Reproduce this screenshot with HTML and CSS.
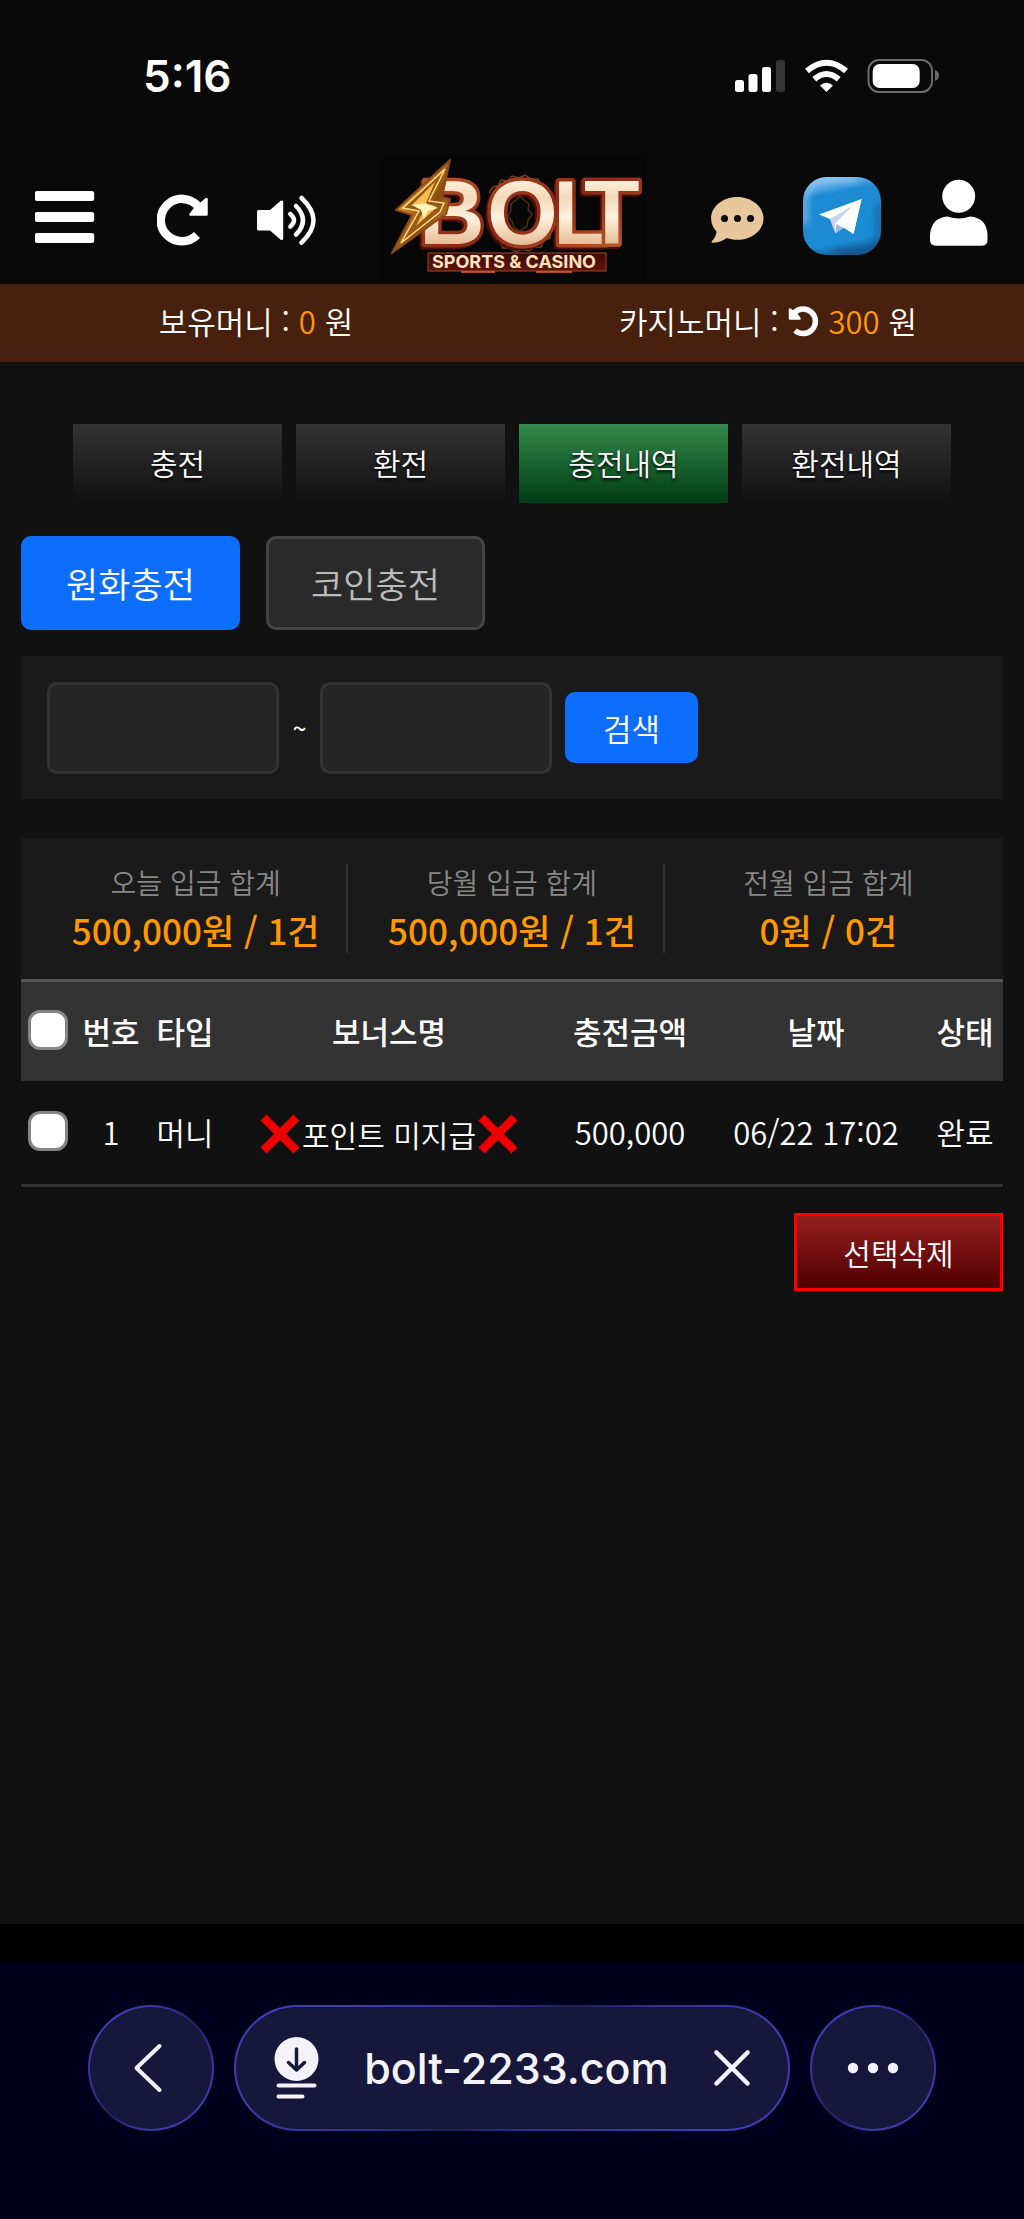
FILE: index.html
```html
<!DOCTYPE html>
<html lang="ko">
<head>
<meta charset="utf-8">
<meta name="viewport" content="width=device-width, initial-scale=1">
<title>BOLT 충전내역</title>
<link rel="stylesheet" href="styles.css">
</head>
<body>
<div class="status">
  <time class="clock">5:16</time>
  <svg class="status-icons" viewBox="735 59 204 34" aria-hidden="true">
    <g fill="#fff">
      <rect x="735" y="80" width="9" height="12" rx="2.5"/>
      <rect x="748.500" y="74" width="9" height="18" rx="2.500"/>
      <rect x="762" y="67" width="9" height="25" rx="2.500"/>
      <rect x="776" y="60" width="9" height="32" rx="2.500" fill="#343436"/>
      <path d="M826.500 92l-6.500-6.500q6.500-5.500 13 0z"/>
      <rect x="872.700" y="64" width="47" height="24" rx="7"/>
    </g>
    <g fill="none" stroke="#fff" stroke-width="6">
      <path d="M807 71q19.500-16.500 39 0"/>
      <path d="M814.300 79.300q12.200-10.600 24.400 0"/>
    </g>
    <rect x="868.500" y="60" width="63.500" height="32" rx="10.500" fill="none" stroke="#6b6b6c" stroke-width="2"/>
    <path d="M935 70q4 1.500 4 5.500t-4 5.500z" fill="#6b6b6c"/>
  </svg>
</div>
<header class="header">
  <div class="group group-left">
    <button type="button" class="icon-btn" aria-label="메뉴">
      <svg width="73" height="84" viewBox="35 176 73 84" fill="#fff"><rect x="34.700" y="191" width="59.500" height="10" rx="2.500"/><rect x="34.700" y="212" width="59.500" height="10" rx="2.500"/><rect x="34.700" y="233" width="59.500" height="10" rx="2.500"/></svg>
    </button>
    <button type="button" class="icon-btn" aria-label="새로고침">
      <svg width="51" height="84" viewBox="157 176 51 84"><path d="M197 235a21.200 21.200 0 1 1 .8-29" fill="none" stroke="#fff" stroke-width="8.500"/><path d="M206.500 199v15.500h-16l4.500-6 5-4z" fill="#fff" stroke="#fff" stroke-width="2.500" stroke-linejoin="round"/></svg>
    </button>
    <button type="button" class="icon-btn" aria-label="소리">
      <svg width="59" height="84" viewBox="257 176 59 84"><path d="M258.500 211.500h12.200l11-9.500v36.500l-11-9.500h-12.200z" fill="#fff" stroke="#fff" stroke-width="3" stroke-linejoin="round"/><g fill="none" stroke="#fff" stroke-width="4.500" stroke-linecap="round"><path d="M290.300 214q7.500 6.200 0 12.600"/><path d="M296 206q14 14.300 0 28.600"/><path d="M301.500 198q24 22.300 0 44.600"/></g></svg>
    </button>
  </div>
  <a class="logo" href="#" aria-label="BOLT Sports &amp; Casino">
    <svg width="265" height="126" viewBox="380 158 265 126">
      <defs>
        <linearGradient id="ivory" x1="0" y1="0" x2="0" y2="1"><stop offset=".15" stop-color="#fff3df"/><stop offset=".35" stop-color="#f3d9ba"/><stop offset=".55" stop-color="#fff2df"/><stop offset=".85" stop-color="#e2b58a"/></linearGradient>
        <linearGradient id="rim" x1="0" y1="0" x2="1" y2="1"><stop offset="0" stop-color="#c06030"/><stop offset=".5" stop-color="#8a2813"/><stop offset="1" stop-color="#c8642f"/></linearGradient>
        <linearGradient id="gold" x1="0" y1="0" x2="1" y2="1"><stop offset="0" stop-color="#ffe9a3"/><stop offset=".35" stop-color="#c98a2e"/><stop offset=".6" stop-color="#8a4a10"/><stop offset="1" stop-color="#e9a742"/></linearGradient>
        <linearGradient id="plate" x1="0" y1="0" x2="0" y2="1"><stop offset="0" stop-color="#3a0b08"/><stop offset="1" stop-color="#641309"/></linearGradient>
      </defs>
      <rect x="380" y="154" width="265" height="130" fill="#070707"/>
      <path d="M488 196l4-6 5-1 3-6 7 1 4-5 7 2 6-3 6 4 7 0 3 6 6 2 2 7 5 5-1 7 4 6-3 7 2 7-5 5-1 7-6 3-3 6-7 0-5 4-7-2-6 3-6-4-7 0-4-6" fill="none" stroke="#6d4519" stroke-width="1.500"/>
      <text class="wordmark" x="418 486 552 583" y="247" fill="url(#ivory)" stroke="url(#rim)">BOLT</text>
      <path d="M519 199l5 5 4 3-1 6 4 4-4 6-1 6-7 5-6-4-2-6-4-5 3-6 0-6 5-4z" fill="none" stroke="#4e3013" stroke-width="1.500"/>
      <path d="M449 163l-54 50 16 5-20 38 54-39 4-15-8-2z" fill="url(#gold)" stroke="#8b4a12" stroke-width="2" stroke-linejoin="round"/>
      <path d="M444 172l-42 39 16 3-18 32 39-31 4-9-15-2z" fill="#9b5917" stroke="#ffdc80" stroke-width="1.500"/>
      <path d="M434 185l-24 24h15l-10 20 19-17-9-6z" fill="#f5bd4f"/>
      <path d="M411 208l12-2 10 3 4 2-10 3-4 8-3-9z" fill="#fff3b8"/>
      <rect x="427" y="256" width="178" height="18" fill="url(#plate)" stroke="#9a4a2a"/>
      <text class="tagline" x="431" y="271" fill="#ffe2bd">SPORTS &amp; CASINO</text>
      <path d="M460 275h34M535 275h36" stroke="#e8672c" stroke-width="1.500"/>
    </svg>
  </a>
  <div class="group group-right">
    <button type="button" class="icon-btn" aria-label="채팅">
      <svg width="53" height="84" viewBox="711 176 53 84"><path d="M737.300 197c14.500 0 26.200 9.600 26.200 21.400s-11.700 21.400-26.200 21.400c-4.300 0-7-.8-10.500-1.800-4 3-9 4.800-14.300 4.800-1 0-1.300-.8-.7-1.500 2.500-2.500 4.300-6 4.800-9.500-3.500-4-5.500-8.300-5.500-13.400 0-11.800 11.700-21.400 26.200-21.400z" fill="#e9c79d"/><g fill="#090909"><circle cx="724.500" cy="218.500" r="3.500"/><circle cx="737.500" cy="218.500" r="3.500"/><circle cx="750.500" cy="218.500" r="3.500"/></g></svg>
    </button>
    <a class="icon-btn" href="#" aria-label="텔레그램">
      <svg width="88" height="84" viewBox="803 176 88 84">
        <defs><linearGradient id="tg" x1=".3" y1="0" x2=".5" y2="1"><stop offset="0" stop-color="#91c7f0"/><stop offset=".22" stop-color="#1c8bd4"/><stop offset=".84" stop-color="#1c8bd4"/><stop offset="1" stop-color="#145b96"/></linearGradient><filter id="soft"><feGaussianBlur stdDeviation="3"/></filter><clipPath id="tile"><rect x="803" y="177" width="78" height="78" rx="24"/></clipPath></defs>
        <rect x="803" y="177" width="78" height="78" rx="24" fill="url(#tg)"/>
        <g clip-path="url(#tile)"><g filter="url(#soft)"><path d="M805 224v-20q0-25 25-25h26" fill="none" stroke="#8dc6f2" stroke-width="6" opacity=".7"/><path d="M879 205v26q0 22-24 22h-20" fill="none" stroke="#125087" stroke-width="5" opacity=".7"/></g></g>
        <path d="M819 214.500l42.500-15.500-8 35-9.500-6.500-8.500 5.500-5.500-14z" fill="#fff"/><path d="M830 219l23.500-14-18.500 19 .5 9z" fill="#c9d3ec"/><path d="M835.500 233l1-9 7 4z" fill="#9fb7dd"/><path d="M836.500 223l18-19.500 7-4.500-8 35z" fill="#fff"/>
      </svg>
    </a>
    <button type="button" class="icon-btn" aria-label="내 정보">
      <svg width="58" height="84" viewBox="930 176 58 84" fill="#fff"><circle cx="958.700" cy="196.300" r="16.500"/><path d="M947.500 216.500q11.500 4 22.500 0 17 1.500 17.500 18.500v5q0 5.700-5.500 5.700h-46q-6 0-6-5.700v-5q1-17 17.500-18.500z"/></svg>
    </button>
  </div>
</header>
<section class="balance">
  <p class="balance-item">보유머니 : <b class="num">0</b> 원</p>
  <p class="balance-item">카지노머니 :
    <button type="button" class="icon-btn" aria-label="카지노머니 새로고침"><svg width="32" height="32" viewBox="0 0 32 32"><path d="M7 25.500a12.300 12.300 0 1 0-.5-18" fill="none" stroke="#fff" stroke-width="5.500"/><path d="M2 4.500v9h9.500l-3-4z" fill="#fff" stroke="#fff" stroke-width="2.500" stroke-linejoin="round"/></svg></button>
    <b class="num">300</b> 원</p>
</section>
<main class="main">
  <nav class="tabs">
    <a class="tab" href="#">충전</a>
    <a class="tab" href="#">환전</a>
    <a class="tab tab-on" href="#" aria-current="page">충전내역</a>
    <a class="tab" href="#">환전내역</a>
  </nav>
  <div class="kinds">
    <button type="button" class="kind kind-on">원화충전</button>
    <button type="button" class="kind">코인충전</button>
  </div>
  <form class="search">
    <input class="date" type="text" aria-label="시작일">
    <span class="tilde">~</span>
    <input class="date" type="text" aria-label="종료일">
    <button type="button" class="search-btn">검색</button>
  </form>
  <dl class="totals">
    <div class="total"><dt>오늘 입금 합계</dt><dd>500,000원 / 1건</dd></div>
    <div class="total"><dt>당월 입금 합계</dt><dd>500,000원 / 1건</dd></div>
    <div class="total"><dt>전월 입금 합계</dt><dd>0원 / 0건</dd></div>
  </dl>
  <table class="list">
    <colgroup><col class="c-check"><col class="c-no"><col class="c-type"><col><col class="c-amount"><col class="c-date"><col class="c-state"></colgroup>
    <thead>
      <tr><th><input class="check" type="checkbox" aria-label="전체 선택"></th><th>번호</th><th>타입</th><th>보너스명</th><th>충전금액</th><th>날짜</th><th>상태</th></tr>
    </thead>
    <tbody>
      <tr>
        <td><input class="check" type="checkbox" aria-label="1번 선택"></td><td>1</td><td>머니</td>
        <td><div class="bonus"><svg class="cross" viewBox="0 0 40 40" aria-hidden="true"><path d="M3.500 3.500l33 33M36.500 3.500l-33 33" stroke="#ee0000" stroke-width="8.500"/></svg>포인트 미지급<svg class="cross" viewBox="0 0 40 40" aria-hidden="true"><path d="M3.500 3.500l33 33M36.500 3.500l-33 33" stroke="#ee0000" stroke-width="8.500"/></svg></div></td>
        <td>500,000</td><td>06/22 17:02</td><td>완료</td>
      </tr>
    </tbody>
  </table>
  <div class="actions"><button type="button" class="delete">선택삭제</button></div>
</main>
<footer class="browser">
  <button type="button" class="round" aria-label="뒤로"><svg width="50" height="50" viewBox="0 0 50 50"><path d="M33.500 3L10.500 25l23 22" fill="none" stroke="#f1f1fd" stroke-width="4" stroke-linecap="round" stroke-linejoin="round"/></svg></button>
  <div class="address">
    <svg width="45" height="62" viewBox="0 0 45 62"><circle cx="22.500" cy="22" r="22" fill="#f3f3f7"/><path d="M22.500 12v21M14.500 25.500l8 7.500 8-7.500" fill="none" stroke="#17173b" stroke-width="3.500" stroke-linecap="round" stroke-linejoin="round"/><path d="M4.500 48.500h36M4.500 59.500h24" stroke="#f7f3fb" stroke-width="4" stroke-linecap="round"/></svg>
    <span class="domain">bolt-2233.com</span>
    <button type="button" class="icon-btn" aria-label="중지"><svg width="36" height="36" viewBox="0 0 36 36"><path d="M2.500 2.500l31 31M33.500 2.500l-31 31" stroke="#f1f1fd" stroke-width="4.500" stroke-linecap="round"/></svg></button>
  </div>
  <button type="button" class="round" aria-label="더보기"><svg width="52" height="12" viewBox="0 0 52 12" fill="#f1f1fd"><circle cx="6" cy="6" r="5.200"/><circle cx="26" cy="6" r="5.200"/><circle cx="46" cy="6" r="5.200"/></svg></button>
</footer>
</body>
</html>
```
FILE: styles.css
```css
* { box-sizing: border-box; }
html { background: #00001d; }
body {
  margin: 0;
  min-height: 100vh;
  display: flex;
  flex-direction: column;
  background: #090909;
  color: #fff;
  font-family: "Noto Sans CJK KR", "Noto Sans", sans-serif;
  font-weight: 350;
  font-size: 31px;
  line-height: 44px;
}
button, input { font: inherit; color: inherit; }
button { padding: 0; border: 0; background: none; cursor: pointer; }
a { color: inherit; text-decoration: none; }
svg { display: block; flex: none; }
p, dl, dd { margin: 0; }

.status {
  display: flex;
  align-items: center;
  justify-content: space-between;
  height: 152px;
  padding: 0 85px 0 143px;
}
.clock { font: 600 44px/48px Inter, sans-serif; }
.status-icons { width: 204px; height: 34px; }

.header {
  display: flex;
  align-items: center;
  justify-content: space-between;
  height: 132px;
  padding: 0 36px 0 35px;
}
.group { display: flex; align-items: center; }
.group-left { gap: 49px; }
.group-right { gap: 39px; }
.icon-btn { display: block; flex: none; }
.logo { display: block; }
.wordmark {
  font: 700 91px "Liberation Sans", sans-serif;
  stroke-width: 7px;
  stroke-linejoin: round;
  paint-order: stroke;
  filter: drop-shadow(-2px 2px 0 #4c0f08);
}
.tagline { font: 700 18px Inter, sans-serif; }

.balance {
  display: grid;
  grid-template-columns: 1fr 1fr;
  height: 78px;
  background: #47210d;
}
.balance-item {
  display: flex;
  align-items: center;
  justify-content: center;
  gap: 9px;
  padding-bottom: 4px;
}
.balance-item .num { color: #ff9800; font-weight: 350; }

.main {
  flex: 1;
  padding: 62px 21px 24px;
  background: #111;
  border-bottom: 39px solid #000;
}
.tabs {
  display: grid;
  grid-template-columns: repeat(4, 1fr);
  gap: 14px;
  padding: 0 52px;
}
.tab {
  display: flex;
  align-items: center;
  justify-content: center;
  height: 79px;
  padding-bottom: 4px;
  background: linear-gradient(#333, #111);
  font-size: 30px;
  text-shadow: 0 2px 3px #000;
}
.tab-on { background: linear-gradient(#348a4a, #003c14); }

.kinds { display: flex; gap: 26px; margin-top: 33px; }
.kind {
  width: 219px;
  height: 94px;
  border: 3px solid #444;
  border-radius: 10px;
  background: #2a2a2a;
  color: #bbb;
  font-size: 35px;
}
.kind-on { border-color: #0d6efd; background: #0d6efd; color: #fff; }

.search {
  display: flex;
  align-items: center;
  gap: 13px;
  height: 143px;
  margin-top: 26px;
  padding: 0 26px;
  background: #1a1a1a;
}
.date {
  width: 232px;
  height: 92px;
  padding: 0 20px;
  border: 3px solid #333;
  border-radius: 10px;
  background: #252525;
}
.tilde { width: 15px; font-size: 24px; font-weight: 500; text-align: center; }
.search-btn {
  width: 133px;
  height: 71px;
  border-radius: 10px;
  background: #0d6efd;
}

.totals {
  display: flex;
  gap: 13px;
  margin-top: 39px;
  padding: 26px 24px;
  background: #1a1a1a;
}
.total {
  flex: 1;
  height: 89px;
  border-right: 2px solid #333;
  text-align: center;
}
.total:last-child { border-right: 0; }
.total dt { font-size: 28px; line-height: 36px; color: #888; }
.total dd { font-size: 35px; line-height: 60px; font-weight: 500; color: #ff9800; }

.list {
  width: 100%;
  table-layout: fixed;
  border-collapse: collapse;
  text-align: center;
}
.list th, .list td { padding: 0; white-space: nowrap; }
.list th { height: 100px; border-top: 3px solid #555; background: #333; font-weight: 500; }
.list td { height: 105px; border-bottom: 3px solid #333; }
.c-check { width: 54px; }
.c-no { width: 72px; }
.c-type { width: 76px; }
.c-amount { width: 150px; }
.c-date { width: 222px; }
.c-state { width: 76px; }
.check {
  appearance: none;
  display: block;
  width: 40px;
  height: 40px;
  margin: 0 7px 2px;
  border: 3px solid #858585;
  border-radius: 12px;
  background: #fff;
}
.check:checked { background: #0d6efd; }
.bonus {
  display: flex;
  align-items: center;
  justify-content: center;
  gap: 2px;
  padding-top: 4px;
  font-size: 30px;
}
.cross { width: 40px; height: 40px; }

.actions { display: flex; justify-content: flex-end; margin-top: 26px; }
.delete {
  width: 209px;
  height: 78px;
  border: 3px solid #f00;
  background: linear-gradient(#951f1f, #500000);
  font-size: 30px;
}

.browser {
  display: flex;
  align-items: flex-start;
  gap: 20px;
  height: 256px;
  padding: 42px 88px;
  background: #00001d;
}
.round, .address {
  display: flex;
  align-items: center;
  justify-content: center;
  height: 126px;
  border: 2px solid transparent;
  border-radius: 63px;
  background:
    linear-gradient(#17173b, #17173b) padding-box,
    linear-gradient(135deg, #3f3fb4 15%, #2e2e8e 40%, #20204e 50%, #2e2e8e 60%, #3f3fb4 85%) border-box;
}
.round { flex: none; width: 126px; }
.address { flex: 1; justify-content: space-between; padding: 0 38px; }
.domain { font: 500 43px/54px Inter, sans-serif; color: #f3f3f7; }
```
